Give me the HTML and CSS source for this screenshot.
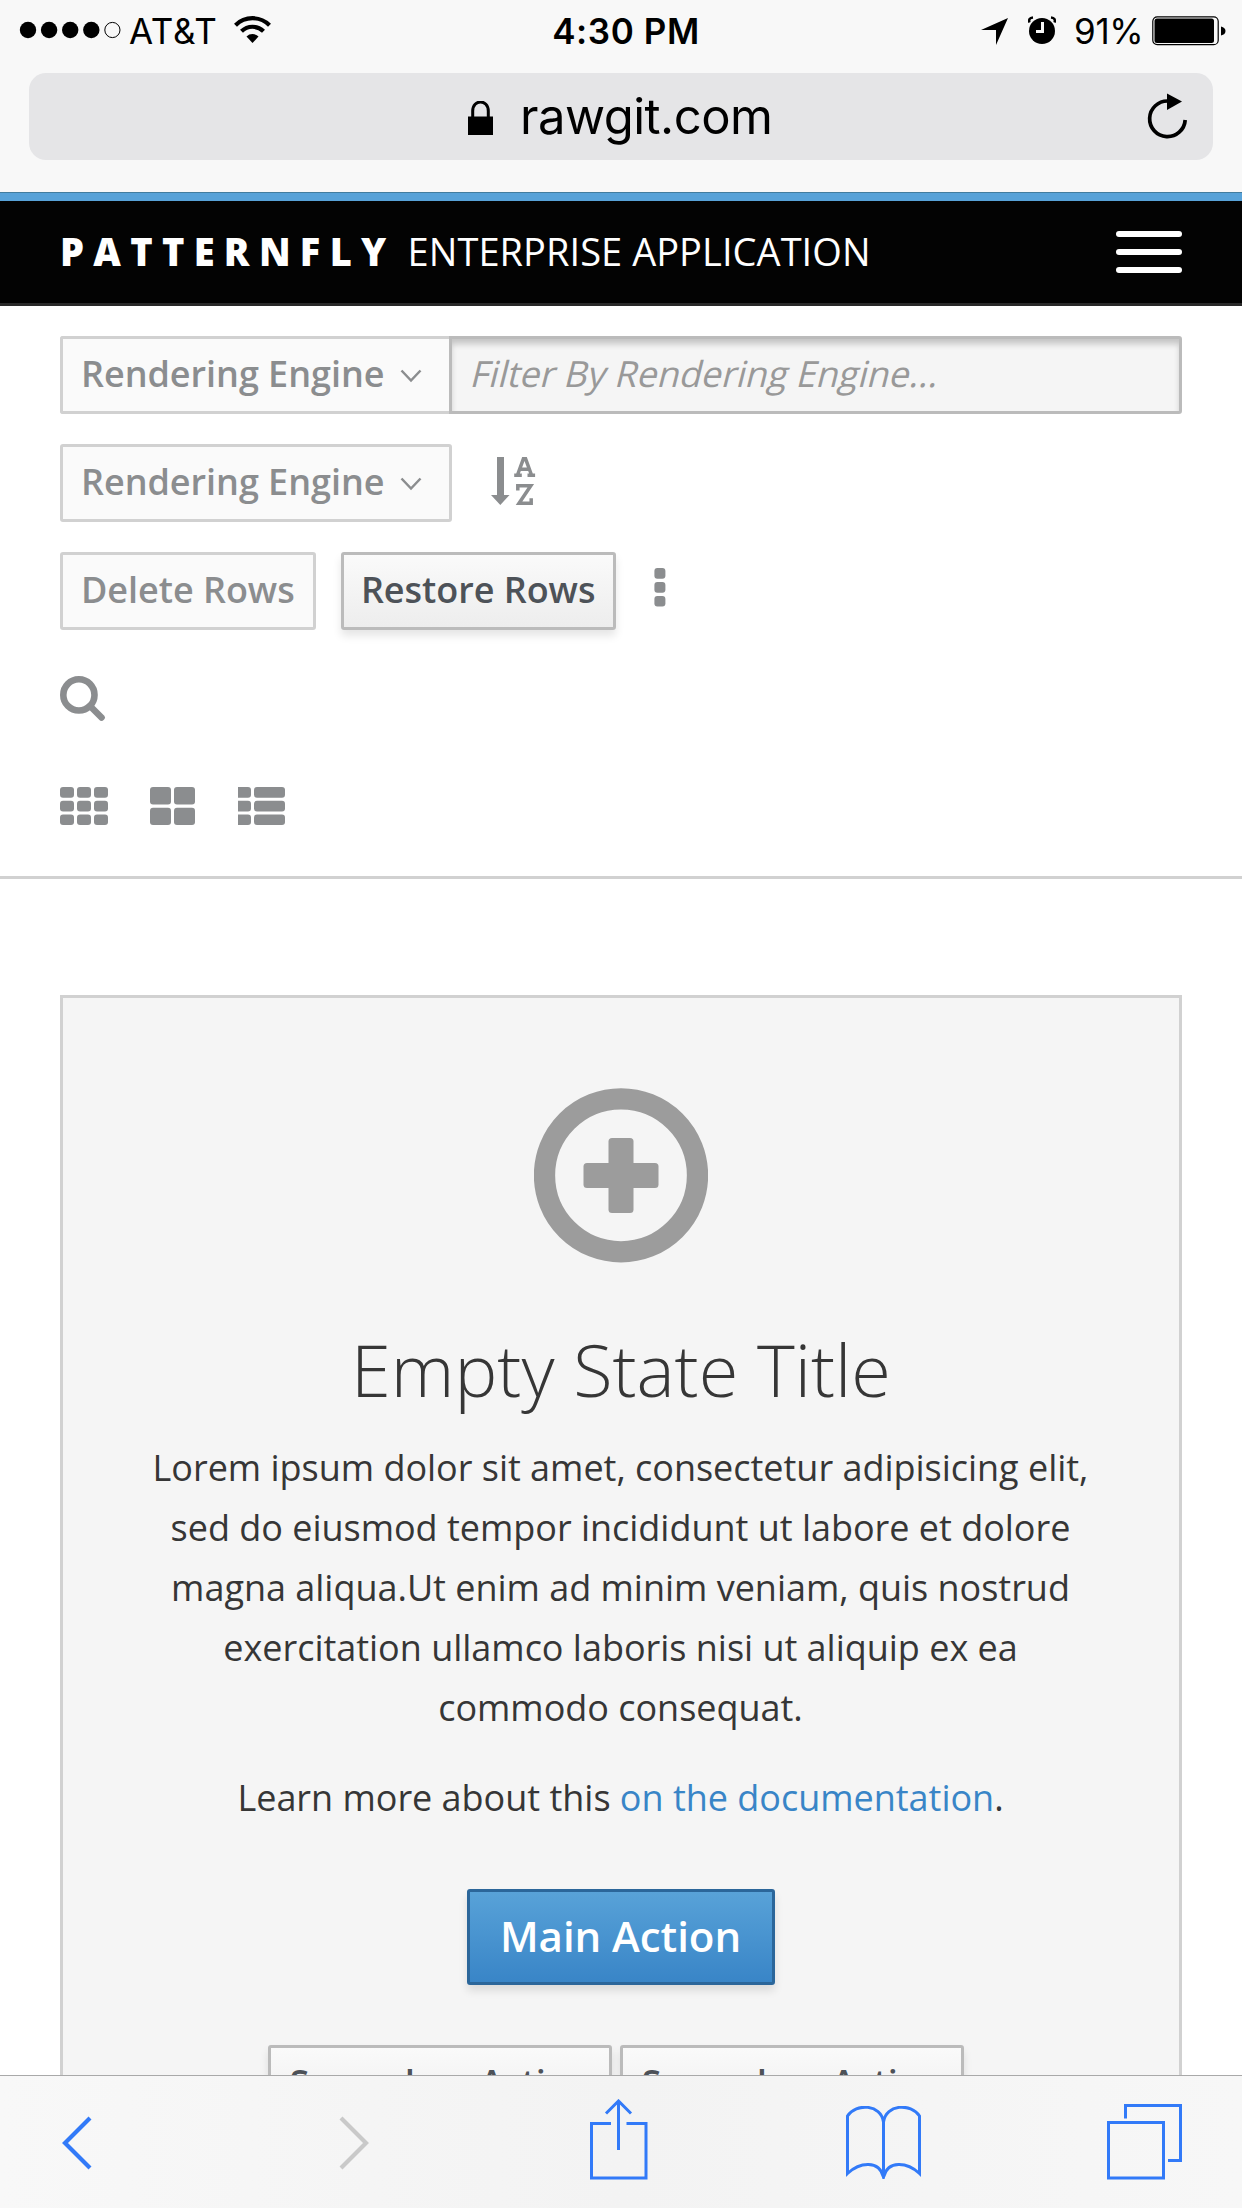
FILE: index.html
```html
<!DOCTYPE html>
<html lang="en">
<head>
<meta charset="utf-8">
<title>PatternFly Enterprise Application</title>
<link rel="stylesheet" href="styles.css">
</head>
<body>
<div class="phone">
  <header class="chrome">
    <div class="status">
      <div class="status-left">
        <svg class="signal" width="106" height="18" viewBox="0 0 106 18"><circle cx="9" cy="9" r="8.2"/><circle cx="30.100" cy="9" r="8.2"/><circle cx="51.200" cy="9" r="8.2"/><circle cx="72.300" cy="9" r="8.2"/><circle cx="93.400" cy="9" r="7.600" fill="none" stroke="#000" stroke-width="1"/></svg>
        <span class="carrier">AT&amp;T</span>
        <svg class="wifi" width="37" height="28" viewBox="0 0 37 28"><path d="M18.500 27 12.500 20.500a8.500 8.500 0 0 1 12 0z"/><path d="M7.500 15.300a15.600 15.600 0 0 1 22 0M1.500 9.200a24.200 24.200 0 0 1 34 0" fill="none" stroke="#000" stroke-width="4.200"/></svg>
      </div>
      <span class="clock">4:30 PM</span>
      <div class="status-right">
        <svg class="locate" width="27" height="27" viewBox="0 0 27 27"><path d="M27 0 15 27V12H0z"/></svg>
        <svg class="alarm" width="28" height="28" viewBox="0 0 28 28"><circle cx="14" cy="15" r="13"/><path d="M1.500 6.500Q0 2 5 1.500M26.500 6.500Q28 2 23 1.500" fill="none" stroke="#000" stroke-width="2.500"/><path d="M14.500 6v9.500H8" fill="none" stroke="#f8f8f8" stroke-width="3"/></svg>
        <span class="percent">91%</span>
        <svg class="battery" width="74" height="30" viewBox="0 0 74 30"><rect x=".8" y=".8" width="65.400" height="27.900" rx="4.500" fill="none" stroke="#000" stroke-width="1.200"/><rect x="2.500" y="2.500" width="59.500" height="24.500" rx="2.500"/><path d="M69 10.500q4.500 1 4.500 4.500T69 19.500z"/></svg>
      </div>
    </div>
    <div class="address">
      <svg class="lock" width="25" height="34" viewBox="0 0 25 34"><path d="M0 15.500h25V34H0z"/><path d="M4.700 17V10c0-12 15.600-12 15.600 0v7" fill="none" stroke="#000" stroke-width="3"/></svg>
      <span class="url">rawgit.com</span>
      <svg class="reload" width="41" height="47" viewBox="0 0 41 47"><path d="M38.200 27A17.800 17.800 0 1 1 21 8" fill="none" stroke="#000" stroke-width="3.700"/><path d="M20 .5 35 8.500 20 17z"/></svg>
    </div>
  </header>

  <nav class="navbar">
    <div class="brand"><b class="brand-name">PATTERNFLY</b><span class="brand-sub">ENTERPRISE APPLICATION</span></div>
    <div class="burger"><i></i><i></i><i></i></div>
  </nav>

  <section class="toolbar">
    <div class="row filter">
      <button class="btn muted select joined"><span class="label">Rendering Engine</span><svg width="22" height="14" viewBox="0 0 22 14"><path d="M1.500 1.500 11 11.500 20.500 1.500"/></svg></button>
      <div class="field"><span class="hint">Filter By Rendering Engine...</span></div>
    </div>
    <div class="row">
      <button class="btn muted select"><span class="label">Rendering Engine</span><svg width="22" height="14" viewBox="0 0 22 14"><path d="M1.500 1.500 11 11.500 20.500 1.500"/></svg></button>
      <svg class="sort" width="45" height="49" viewBox="0 0 45 49"><path d="M6 0h7v38h5.500L9.300 48 0 38h6z"/><path d="M26.500 18 32.400 1.800h2.200L40.500 18M28 12.300h11M23.200 18.300h7.600M36.500 18.300h7.600M26.800 33.500v-4.700h13L28 46.300h12.200v-5" fill="none" stroke="#8b8d8f" stroke-width="3.500"/></svg>
    </div>
    <div class="row">
      <button class="btn muted">Delete Rows</button>
      <button class="btn plain restore">Restore Rows</button>
      <svg class="kebab" width="12" height="39" viewBox="0 0 12 39"><rect x=".4" width="11" height="10.700" rx="3"/><rect x=".4" y="14" width="11" height="10.700" rx="3"/><rect x=".4" y="28" width="11" height="10.500" rx="3"/></svg>
    </div>
    <div class="row">
      <svg class="search" width="46" height="46" viewBox="0 0 46 46"><circle cx="18.900" cy="18.900" r="15.600"/><path d="M30 30 41.500 41.500" stroke-linecap="round"/></svg>
    </div>
    <div class="row views">
      <svg width="48" height="38" viewBox="0 0 48 38"><rect width="14" height="10.700" rx="3"/><rect x="17" width="14" height="10.700" rx="3"/><rect x="34" width="14" height="10.700" rx="3"/><rect y="13.800" width="14" height="10.700" rx="3"/><rect x="17" y="13.800" width="14" height="10.700" rx="3"/><rect x="34" y="13.800" width="14" height="10.700" rx="3"/><rect y="27.500" width="14" height="10.500" rx="3"/><rect x="17" y="27.500" width="14" height="10.500" rx="3"/><rect x="34" y="27.500" width="14" height="10.500" rx="3"/></svg>
      <svg width="46" height="38" viewBox="0 0 46 38"><rect width="21" height="17.500" rx="3"/><rect x="24" width="21" height="17.500" rx="3"/><rect y="20.800" width="21" height="17.200" rx="3"/><rect x="24" y="20.800" width="21" height="17.200" rx="3"/></svg>
      <svg width="47" height="38" viewBox="0 0 47 38"><path d="M0 0h10q3 0 3 3v4.700q0 3-3 3H0zM0 13.800h10q3 0 3 3v4.700q0 3-3 3H0zM0 27.500h10q3 0 3 3V35q0 3-3 3H0z"/><rect x="16" width="31" height="10.700" rx="3"/><rect x="16" y="13.800" width="31" height="10.700" rx="3"/><rect x="16" y="27.500" width="31" height="10.500" rx="3"/></svg>
    </div>
  </section>

  <main class="content">
    <div class="blank">
      <svg class="add" width="174" height="175" viewBox="0 0 174 175"><circle cx="87" cy="87.300" r="76.500" fill="none" stroke="#9c9c9c" stroke-width="21.300"/><rect x="49.500" y="75" width="75" height="25" rx="3.500"/><rect x="74.500" y="50" width="25" height="75" rx="3.500"/></svg>
      <h1 class="title">Empty State Title</h1>
      <p class="copy">Lorem ipsum dolor sit amet, consectetur adipisicing elit,<br>sed do eiusmod tempor incididunt ut labore et dolore<br>magna aliqua.Ut enim ad minim veniam, quis nostrud<br>exercitation ullamco laboris nisi ut aliquip ex ea<br>commodo consequat.</p>
      <p class="copy">Learn more about this <a class="link">on the documentation</a>.</p>
      <button class="btn primary">Main Action</button>
      <div class="secondary">
        <button class="btn plain">Secondary Action</button>
        <button class="btn plain">Secondary Action</button>
      </div>
    </div>
  </main>

  <footer class="tabbar">
    <svg class="back" width="30" height="54" viewBox="0 0 30 54"><path d="M28 2 3 27l25 25"/></svg>
    <svg class="forward" width="30" height="54" viewBox="0 0 30 54"><path d="M2 2l25 25L2 52"/></svg>
    <svg class="share" width="58" height="81" viewBox="0 0 58 81"><path d="M21 24.500H1.500v54.500h54.500V24.500H36.500M28.500 51V3M16 14.500 28.500 2 41 14.500"/></svg>
    <svg class="book" width="76" height="73" viewBox="0 0 76 73"><path d="M37.500 71V16C35-2 10-3 1.500 10v57.500C14 56 33 54 37.500 71 42 54 61 56 73.500 67.500V10C65-3 40-2 37.500 16"/></svg>
    <svg class="tabs" width="76" height="76" viewBox="0 0 76 76"><path d="M1.500 18.500h55v55.500h-55zM18.500 14.500V1.500h55v55H61"/></svg>
  </footer>
</div>
</body>
</html>
```
FILE: styles.css
```css
* { box-sizing: border-box; }
body { margin: 0; background: #fff; font-family: "Open Sans", sans-serif; color: #363636; }
svg { display: block; flex: none; }
.phone { width: 1242px; height: 2208px; overflow: hidden; display: flex; flex-direction: column; }

/* Browser chrome */
.chrome { height: 193px; flex: none; border-bottom: 1px solid #437d9f; background: #f8f8f8; font-family: Inter, sans-serif; color: #000; }
.status { height: 73px; padding: 0 16px 13px 19px; display: grid; grid-template-columns: 1fr auto 1fr; align-items: center; font-size: 35px; line-height: 40px; }
.status-left, .status-right { display: flex; align-items: center; }
.status-right { justify-content: flex-end; }
.carrier { margin: 2px 0 0 4px; width: 87px; letter-spacing: .7px; white-space: nowrap; }
.wifi { margin-left: 18px; }
.clock { margin-top: 2px; padding-left: 7px; font-weight: 600; letter-spacing: .6px; }
.locate { margin-top: 3px; }
.alarm { margin-left: 20px; }
.percent { margin: 2px 0 0 18px; width: 66px; letter-spacing: -.3px; }
.battery { margin: 2px 0 0 12px; }
.address { margin: 0 29px; height: 87px; border-radius: 17px; background: #e5e5e7; display: flex; align-items: center; padding-left: 440px; padding-right: 25px; }
.lock { margin: 2px 0 0 -1px; }
.url { font-size: 49px; line-height: 80px; margin-left: 27px; letter-spacing: -.5px; }
.reload { margin-left: auto; }

/* Application navbar */
.navbar { height: 113px; flex: none; border-top: 8px solid #58a2d8; border-bottom: 3px solid #292929; background: #030303; display: flex; justify-content: space-between; align-items: center; padding: 0 60px; color: #fff; }
.brand { margin-top: -2px; display: flex; align-items: baseline; font-size: 38px; line-height: 60px; white-space: nowrap; }
.brand-name { font-weight: 800; letter-spacing: 9.300px; }
.brand-sub { margin-left: 12px; letter-spacing: .05px; }
.burger { display: grid; gap: 12px; }
.burger i { width: 66px; height: 6px; border-radius: 3px; background: #fff; }

/* Filter toolbar */
.toolbar { height: 573px; flex: none; padding: 30px 60px 0; border-bottom: 3px solid #d1d1d1; fill: #8b8d8f; }
.row { display: flex; align-items: center; height: 78px; margin-bottom: 30px; }
.btn { font: 600 36px/60px "Open Sans", sans-serif; letter-spacing: -.04px; height: 78px; padding: 5px 18px 7px; border: 3px solid #bbb; border-radius: 3px; white-space: nowrap; }
.muted { background: #fafafa; border-color: #d1d1d1; color: #8b8d8f; }
.plain { background: linear-gradient(#fafafa, #ededed); color: #4d5258; box-shadow: 0 6px 9px rgba(3, 3, 3, .1); }
.select { width: 392px; display: flex; align-items: center; }
.select svg { margin: 3px 0 0 16px; fill: none; stroke: #8b8d8f; stroke-width: 2.500; }
.joined { width: 389px; border-right: 0; border-radius: 3px 0 0 3px; }
.field { flex: 1; height: 78px; border: 3px solid #bbb; border-radius: 0 3px 3px 0; background: #f5f5f5; box-shadow: inset 0 6px 6px -1px rgba(3, 3, 3, .2); padding: 5px 17px 7px; font-size: 36px; line-height: 60px; color: #999; }
.hint { display: inline-block; transform: skewX(-14deg); transform-origin: 0 43px; }
.sort { margin: -3px 0 0 39px; }
.restore { margin-left: 25px; width: 275px; padding-left: 17px; padding-right: 17px; }
.kebab { margin: -7px 0 0 38px; }
.search { fill: none; stroke: #8b8d8f; stroke-width: 6.600; }
.views { gap: 42px; padding-bottom: 2px; }

/* Empty state */
.content { flex: 1; min-height: 0; padding: 116px 60px 0; }
.blank { height: 1300px; border: 3px solid #d1d1d1; background: #f5f5f5; padding-top: 90px; display: flex; flex-direction: column; align-items: center; text-align: center; }
.add { fill: #9c9c9c; }
.title { margin: 66px 0 29px; font-weight: 300; font-size: 72px; line-height: 80px; }
.copy { margin: 0 1px 30px 0; font-size: 36px; line-height: 60px; letter-spacing: -.02px; white-space: nowrap; }
.link { color: #3985c7; }
.primary { margin-top: 31px; width: 308px; height: 96px; padding: 0 1px 2px 0; font-size: 42px; color: #fff; border-color: #2b669a; background: linear-gradient(#58a2d8, #3985c7); box-shadow: 0 6px 9px rgba(3, 3, 3, .1); }
.secondary { margin: 60px 10px 0 0; width: 696px; display: flex; justify-content: space-between; }
.secondary .btn { width: 344px; padding: 5px 0 7px; }

/* Bottom browser bar */
.tabbar { height: 133px; flex: none; border-top: 1px solid #a9a9a9; background: linear-gradient(90deg, #f8f8f8, #f3f3f3 50%, #f7f7f7); display: flex; fill: none; stroke: #327af8; stroke-width: 3; }
.back { margin: 40px 0 0 62px; stroke-width: 4.200; }
.forward { margin: 40px 0 0 247px; stroke: #c9c9c9; stroke-width: 4.200; }
.share { margin: 23px 0 0 221px; }
.book { margin: 30px 0 0 198px; }
.tabs { margin: 28px 0 0 185px; }
```
